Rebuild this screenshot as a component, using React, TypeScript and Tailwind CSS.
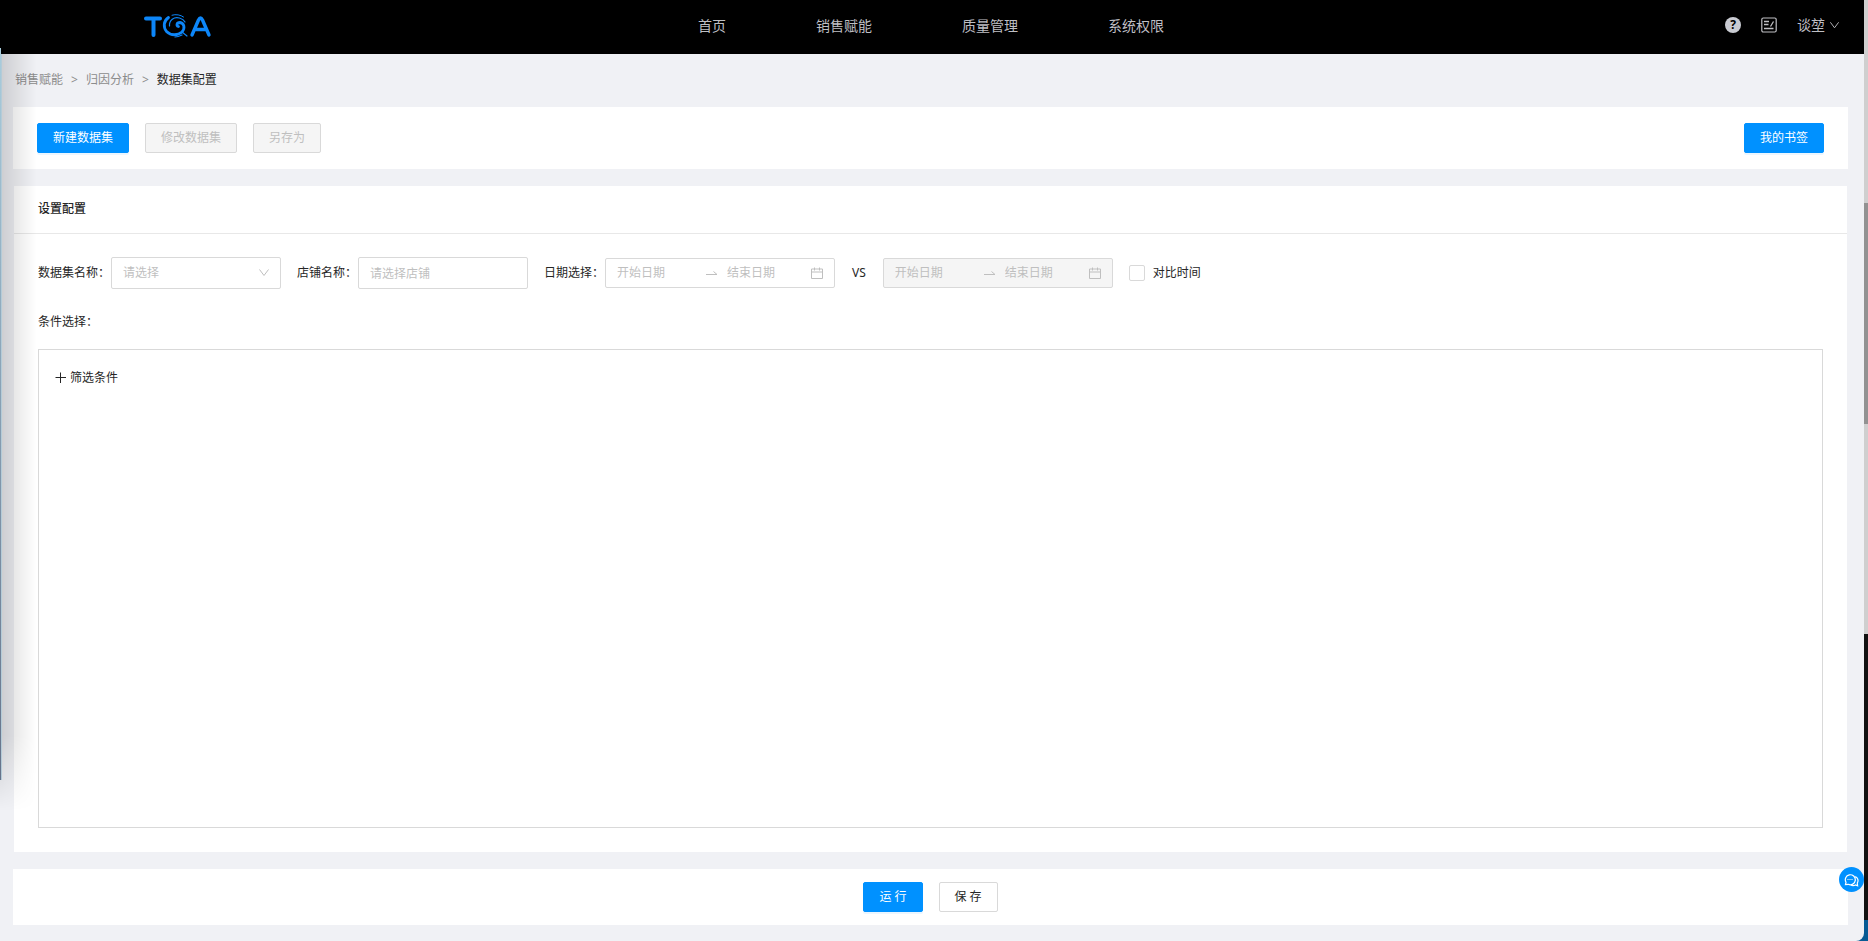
import React from 'react';

const btn = 'flex h-[30px] items-center rounded-xs border px-[15px] text-xs whitespace-nowrap';
const primary = 'border-[#0091ff] bg-[#0091ff] text-white shadow-[0_2px_0_rgba(0,145,255,0.08)]';
const disabledBtn = 'border-[#d9d9d9] bg-[#f5f5f5] text-[#bfbfbf]';

function Logo() {
  return (
    <svg width="68" height="24" viewBox="0 0 68 24" fill="none" stroke="#0d86f8" strokeLinecap="round" aria-label="TGA" role="img">
      <path d="M2 4.500H16M9.500 4.500V21" strokeWidth="4" />
      <path d="M48 21L54.500 6Q56.500 2 58.500 6L65 21M51 15.500H62" strokeWidth="3.400" strokeLinejoin="round" />
      <path d="M24.500 3.500C19.500 7 19 13 22.500 17.500C27 22 34 21.500 38 18C41.500 14 40 9 36 8.500C32.500 8.500 32 12 34.500 12.500" strokeWidth="2.800" />
      <path d="M25.500 12C25 6 30 2.500 35.500 4C38 4.800 40 6 41 8" strokeWidth="1.200" />
      <path d="M28 1.200C32 0 36.500 .8 39.500 3" strokeWidth="1" />
      <path d="M38 18L43 22M31 23C33.500 23 36 22 38 21" strokeWidth="1.200" />
    </svg>
  );
}

function ChevronDown({ size }: { size: number }) {
  return (
    <svg width={size} height={size} viewBox="0 0 12 12" fill="none" stroke="currentColor" aria-hidden="true">
      <path d="M1.500 2.500L6 8.500L10.500 2.500" />
    </svg>
  );
}

function Calendar() {
  return (
    <svg width="12" height="12" viewBox="0 0 12 12" fill="none" stroke="currentColor" aria-hidden="true">
      <path d="M.5 2H11.500V11.500H.5ZM.5 5H11.500M3.500 .5V3.500M8.500 .5V3.500" />
    </svg>
  );
}

function RangePicker({ name, disabled = false }: { name: string; disabled?: boolean }) {
  const input = 'min-w-0 bg-transparent text-xs outline-none placeholder:text-[#bfbfbf]';
  return (
    <div
      role="group"
      aria-label={name}
      className={`flex h-[30px] w-[230px] items-center rounded-xs border border-[#d9d9d9] px-[11px] text-[#bfbfbf] ${disabled ? 'bg-[#f5f5f5]' : 'bg-white'}`}
    >
      <input className={`w-[88px] ${input}`} placeholder="开始日期" aria-label={`${name} 开始日期`} disabled={disabled} />
      <svg width="14" height="12" viewBox="0 0 14 12" fill="none" stroke="currentColor" className="mr-2 shrink-0" aria-hidden="true">
        <path d="M1 7.500H12L8.500 4.500" />
      </svg>
      <input className={`flex-1 ${input}`} placeholder="结束日期" aria-label={`${name} 结束日期`} disabled={disabled} />
      <Calendar />
    </div>
  );
}

export default function App() {
  return (
    <div className="flex min-h-screen bg-[linear-gradient(#111_95%,#075a94_98%)] font-['Noto_Sans','Noto_Sans_CJK_SC',sans-serif] text-xs text-[#262626]">
      <div className="relative flex min-h-screen min-w-0 flex-1 flex-col rounded-br-lg bg-[#f0f1f5]">
        <header className="grid h-[54px] grid-cols-[1fr_auto_1fr] items-center bg-black pb-[2px] text-sm text-[#bfbfc4]">
          <a href="#" className="ml-36 w-fit">
            <Logo />
          </a>
          <nav className="mr-[2px] flex gap-[90px]">
            <a href="#">首页</a>
            <a href="#">销售赋能</a>
            <a href="#">质量管理</a>
            <a href="#">系统权限</a>
          </nav>
          <div className="mr-6 flex items-center justify-end gap-5 pb-[2px]">
            <button aria-label="帮助" className="grid size-4 place-items-center rounded-full bg-[#c9cbd2] text-xs font-bold text-black">
              ?
            </button>
            <button aria-label="记录">
              <svg width="16" height="16" viewBox="0 0 16 16" fill="none" stroke="currentColor" aria-hidden="true">
                <rect x=".8" y="1" width="14.400" height="14" rx="1.500" strokeWidth="1.200" />
                <path d="M3 4.500H8M3 7.500H7.500M3 11.500H12.500M9.500 9.500L12.500 4.500" strokeWidth="1.300" />
              </svg>
            </button>
            <button className="flex items-center gap-1">
              谈堃
              <ChevronDown size={11} />
            </button>
          </div>
        </header>

        <div className="flex flex-1 flex-col pr-4 pb-4 pl-[13px]">
          <nav aria-label="面包屑" className="flex h-[53px] items-center gap-2 pb-px pl-[2px] text-[#8c8c8c]">
            <a href="#">销售赋能</a>
            <span>&gt;</span>
            <a href="#">归因分析</a>
            <span>&gt;</span>
            <span className="text-[#262626]">数据集配置</span>
          </nav>

          <div className="flex h-[62px] items-center gap-4 bg-white px-6">
            <button className={`${btn} ${primary}`}>新建数据集</button>
            <button disabled className={`${btn} ${disabledBtn}`}>修改数据集</button>
            <button disabled className={`${btn} ${disabledBtn}`}>另存为</button>
            <button className={`${btn} ${primary} ml-auto`}>我的书签</button>
          </div>

          <section className="mx-px mt-[17px] flex flex-1 flex-col bg-white">
            <h2 className="flex h-12 items-center border-b border-[#e8e8e8] px-6 pb-px font-medium">设置配置</h2>
            <div className="flex flex-1 flex-col px-6 pt-[23px] pb-6">
              <div className="flex flex-wrap items-center gap-4">
                <div className="flex items-center gap-px">
                  <label htmlFor="dataset">数据集名称：</label>
                  <div className="relative">
                    <select id="dataset" defaultValue="" className="h-8 w-[170px] appearance-none rounded-xs border border-[#d9d9d9] bg-white px-[11px] text-[#bfbfbf]">
                      <option value="">请选择</option>
                    </select>
                    <span className="pointer-events-none absolute inset-y-0 right-[11px] flex items-center text-[#bfbfbf]">
                      <ChevronDown size={12} />
                    </span>
                  </div>
                </div>
                <div className="flex items-center gap-px">
                  <label htmlFor="shop">店铺名称：</label>
                  <input id="shop" placeholder="请选择店铺" className="h-8 w-[170px] rounded-xs border border-[#d9d9d9] px-[11px] placeholder:text-[#bfbfbf]" />
                </div>
                <div className="flex items-center gap-px">
                  <span>日期选择：</span>
                  <RangePicker name="日期选择" />
                </div>
                <span className="px-px">VS</span>
                <RangePicker name="对比日期" disabled />
                <label className="flex items-center gap-2">
                  <input type="checkbox" className="size-4 appearance-none rounded-xs border border-[#d9d9d9] bg-white checked:bg-[#0091ff]" />
                  对比时间
                </label>
              </div>
              <p className="mt-6 mb-[18px] leading-[18px]">条件选择：</p>
              <div className="flex-1 border border-[#d9d9d9] px-4 py-5">
                <button className="flex items-center gap-[3px]">
                  <svg width="12" height="12" viewBox="0 0 12 12" fill="none" stroke="currentColor" aria-hidden="true">
                    <path d="M5.500 .5V11M.5 5.500H11" />
                  </svg>
                  筛选条件
                </button>
              </div>
            </div>
          </section>

          <div className="mt-[17px] flex h-14 items-center justify-center gap-4 bg-white">
            <button className={`${btn} ${primary}`}>运 行</button>
            <button className={`${btn} border-[#d9d9d9] bg-white`}>保 存</button>
          </div>
        </div>

        <button aria-label="在线客服" className="absolute right-0 bottom-[49px] grid size-[25px] place-items-center rounded-full bg-[#0091ff] text-white">
          <svg width="15" height="14" viewBox="0 0 15 14" fill="none" stroke="currentColor" strokeWidth="1.200" aria-hidden="true">
            <path d="M1.500 11.500L2 9.300A5 5 0 1 1 4.200 11.300ZM11.300 3.500A4.500 4.500 0 0 1 13.300 10L13.600 12.800L11.500 12A5 5 0 0 1 7 12.300" />
            <path d="M3.500 6.500H4.500M5.500 6.500H6.500M7.500 6.500H8.500" />
          </svg>
        </button>
        <div className="pointer-events-none absolute top-[54px] bottom-[130px] left-0 w-9 bg-linear-to-r from-black/15 to-transparent mask-b-from-90%" />
        <div className="pointer-events-none absolute top-12 bottom-[161px] left-0 w-px bg-linear-to-b from-[#a9cddd] to-[#66738a]" />
        <div className="pointer-events-none absolute top-[54px] bottom-[161px] left-px w-px bg-[#b4cbd8]" />
      </div>

      <div className="flex w-1 flex-col">
        <div className="h-[203px] bg-[#cfcfcf]" />
        <div className="h-[221px] bg-[#929292]" />
        <div className="h-[210px] bg-[#cfcfcf]" />
        <div className="flex-1 bg-[#111]" />
        <div className="h-[21px] bg-[#075a94]" />
      </div>
    </div>
  );
}
